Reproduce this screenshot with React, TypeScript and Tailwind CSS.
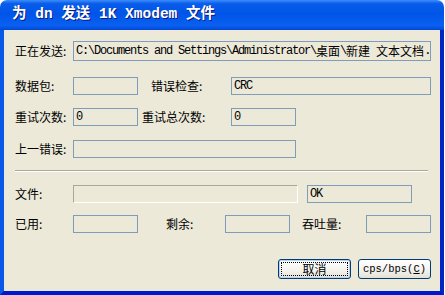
import React from "react";

const cjk = '"Noto Sans CJK SC", "Liberation Sans", sans-serif';
const mono = '"Liberation Mono", "Noto Sans CJK SC", monospace';

// one label of the form, fixed width so the boxes line up
function Label({ text, w }: { text: string; w: string }) {
  return (
    <div
      className={`${w} shrink-0 text-[12px] leading-none text-black whitespace-nowrap`}
      style={{ fontFamily: cjk }}
    >
      {text}
    </div>
  );
}

function Box({ w, h = "h-[18px]", children }: { w: string; h?: string; children?: React.ReactNode }) {
  return (
    <div
      className={`${w} ${h} shrink-0 border border-[#7F9DB9] bg-[#ECE9D8] flex items-center pl-[2px] overflow-hidden whitespace-pre text-[12px] tracking-[-1.2px] text-black`}
      style={{ fontFamily: mono }}
    >
      {children}
    </div>
  );
}

function Wide({ children }: { children: React.ReactNode }) {
  return <span className="text-[12px] tracking-[0px]" style={{ fontFamily: cjk }}>{children}</span>;
}

export default function App() {
  return (
    <div className="w-[445px] h-[295px] bg-white">
      <div className="w-[444px] h-[295px] flex flex-col rounded-t-[7px] overflow-hidden">
        {/* title bar */}
        <div className="h-[30px] shrink-0 flex items-center pl-[12px] bg-[linear-gradient(to_bottom,#3C8EFB_0%,#0A5DEA_12%,#0055E8_45%,#0A60F0_85%,#0048D6_100%)]">
          <span
            className="text-[14.5px] font-bold text-white whitespace-nowrap [text-shadow:1px_1px_0_#0A1A80]"
            style={{ fontFamily: mono }}
          >
            为 dn 发送 1K Xmodem 文件
          </span>
        </div>

        {/* client area with window frame */}
        <div className="flex-1 flex flex-col border-l-4 border-r-4 border-b-4 border-l-[#0A58E6] border-r-[#0026C4] border-b-[#0019CF]">
          <div className="flex-1 bg-[#ECE9D8] pl-[11px] flex flex-col">
            <div className="mt-[11px] flex items-center h-[20px]">
              <Label text="正在发送:" w="w-[58px]" />
              <Box w="w-[358px]" h="h-[20px]">
                <span>{"C:\\Documents and Settings\\Administrator\\"}</span>
                <Wide>桌面</Wide>
                <span>{"\\"}</span>
                <Wide>新建</Wide>
                <span className="inline-block w-[6px] shrink-0" />
                <Wide>文本文档</Wide>
                <span>.</span>
              </Box>
            </div>

            <div className="mt-[16px] flex items-center h-[18px]">
              <Label text="数据包:" w="w-[58px]" />
              <Box w="w-[65px]" />
              <div className="w-[13px] shrink-0" />
              <Label text="错误检查:" w="w-[80px]" />
              <Box w="w-[200px]">CRC</Box>
            </div>

            <div className="mt-[13px] flex items-center h-[18px]">
              <Label text="重试次数:" w="w-[58px]" />
              <Box w="w-[65px]">0</Box>
              <div className="w-[4px] shrink-0" />
              <Label text="重试总次数:" w="w-[89px]" />
              <Box w="w-[65px]">0</Box>
            </div>

            <div className="mt-[14px] flex items-center h-[18px]">
              <Label text="上一错误:" w="w-[58px]" />
              <Box w="w-[223px]" />
            </div>

            <div className="mt-[12px] mr-[12px] h-[2px] border-t border-b border-t-[#ACA899] border-b-white" />

            <div className="mt-[13px] flex items-center h-[18px]">
              <Label text="文件:" w="w-[58px]" />
              <div className="w-[225px] h-[18px] shrink-0 border border-t-[#ACA899] border-l-[#ACA899] border-b-white border-r-white" />
              <div className="w-[9px] shrink-0" />
              <Box w="w-[105px]">OK</Box>
            </div>

            <div className="mt-[12px] flex items-center h-[18px]">
              <Label text="已用:" w="w-[58px]" />
              <Box w="w-[65px]" />
              <div className="w-[28px] shrink-0" />
              <Label text="剩余:" w="w-[59px]" />
              <Box w="w-[65px]" />
              <div className="w-[12px] shrink-0" />
              <Label text="吞吐量:" w="w-[64px]" />
              <Box w="w-[65px]" />
            </div>

            <div className="mt-[26px] flex justify-end gap-[7px] pr-[9px]">
              <button className="w-[73px] h-[20px] rounded-[3px] border border-[#003C74] bg-[linear-gradient(to_bottom,#FFFFFF,#F4F3EE_55%,#E3E0D6)] p-[2px] shadow-[inset_0_0_0_1px_#B9D1F5]">
                <span
                  className="h-full flex items-center justify-center border border-dotted border-black text-[12px] leading-none text-black"
                  style={{ fontFamily: cjk }}
                >
                  取消
                </span>
              </button>
              <button className="w-[73px] h-[20px] rounded-[3px] border border-[#003C74] bg-[linear-gradient(to_bottom,#FFFFFF,#F4F3EE_55%,#E3E0D6)] flex items-center justify-center">
                <span className="text-[10.5px] leading-none text-black whitespace-nowrap" style={{ fontFamily: mono }}>
                  cps/bps(<span className="underline">C</span>)
                </span>
              </button>
            </div>
          </div>
        </div>
      </div>
    </div>
  );
}
